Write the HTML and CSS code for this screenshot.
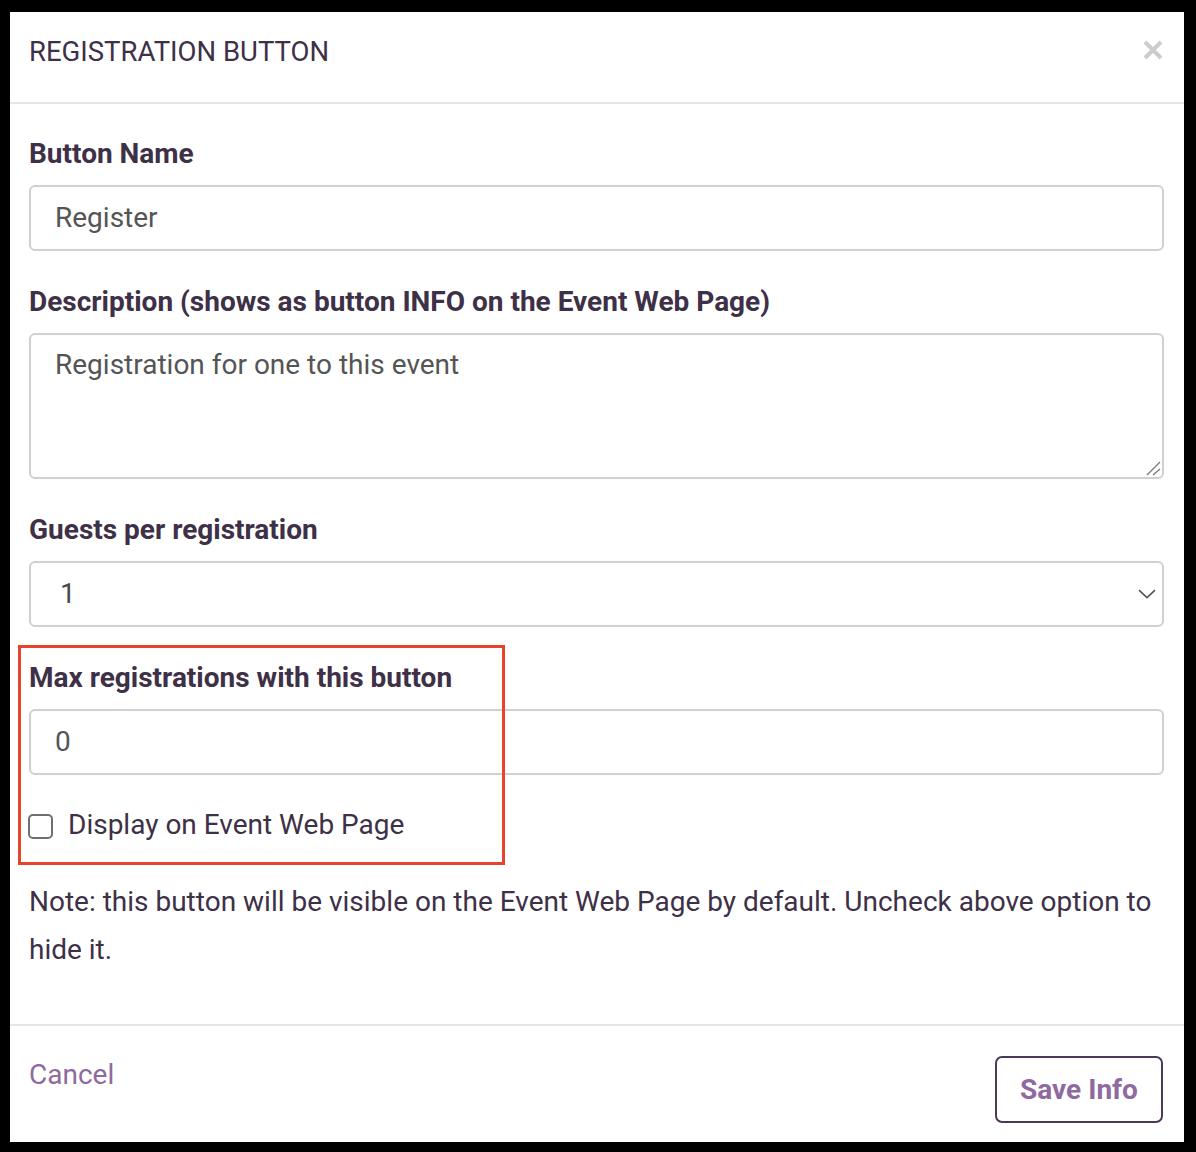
FILE: index.html
```html
<!DOCTYPE html>
<html>
<head>
<meta charset="utf-8">
<link rel="stylesheet" href="styles.css">
</head>
<body>
<div class="modal">
  <div class="modal-header">
    <h1 class="title">REGISTRATION BUTTON</h1>
    <svg class="close" width="20" height="20" viewBox="0 0 20 20"><path d="M2 2 L18 18 M18 2 L2 18" stroke="#cccccc" stroke-width="4" stroke-linecap="butt" fill="none"/></svg>
  </div>
  <div class="modal-body">
    <div class="field">
      <label class="label">Button Name</label>
      <div class="input">Register</div>
    </div>
    <div class="field">
      <label class="label">Description (shows as button INFO on the Event Web Page)</label>
      <div class="input textarea">Registration for one to this event
        <svg class="grip" width="15" height="15" viewBox="0 0 15 15"><path d="M14 1 L1 14 M14 8 L7 14" stroke="#777" stroke-width="1.3" fill="none"/></svg>
      </div>
    </div>
    <div class="field">
      <label class="label">Guests per registration</label>
      <div class="input select"><span class="sel-val">1</span>
        <svg class="chev" width="18" height="10" viewBox="0 0 18 10"><path d="M1 1.2 L9 8.6 L17 1.2" stroke="#555" stroke-width="1.6" fill="none"/></svg>
      </div>
    </div>
    <div class="field highlight-wrap">
      <label class="label">Max registrations with this button</label>
      <div class="input">0</div>
      <div class="check-row">
        <span class="checkbox"></span>
        <span class="check-label">Display on Event Web Page</span>
      </div>
      <div class="annotation"></div>
    </div>
    <p class="note">Note: this button will be visible on the Event Web Page by default. Uncheck above option to hide it.</p>
  </div>
  <div class="modal-footer">
    <a class="cancel">Cancel</a>
    <button class="save">Save Info</button>
  </div>
</div>
</body>
</html>
```

FILE: styles.css
```css
html, body {
  margin: 0;
  padding: 0;
  background: #000;
}
body {
  font-family: Roboto, "Liberation Sans", sans-serif;
  color: #3d3047;
  height: 1152px;
  overflow: hidden;
}
.modal {
  margin: 12px 0 0 10px;
  width: 1174px;
  height: 1130px;
  background: #fff;
  display: flex;
  flex-direction: column;
}
.modal-header {
  height: 92px;
  flex: none;
  border-bottom: 2px solid #e6e6e6;
  display: flex;
  align-items: flex-start;
  justify-content: space-between;
  padding: 24px 21px 0 19px;
  box-sizing: border-box;
}
.title {
  margin: 0;
  font-size: 27.5px;
  font-weight: 400;
  color: #3d3047;
  line-height: 32px;
}
.close {
  margin-top: 4px;
}
.modal-body {
  padding: 34px 20px 0 19px;
  flex: 1;
}
.field {
  display: flex;
  flex-direction: column;
  margin-bottom: 35px;
}
.label {
  font-size: 28px;
  font-weight: 700;
  line-height: 32px;
  margin-bottom: 15px;
  color: #3d3047;
}
.input {
  height: 66px;
  border: 2px solid #d0d0d0;
  border-radius: 6px;
  box-sizing: border-box;
  padding: 0 24px;
  display: flex;
  align-items: center;
  font-size: 28px;
  line-height: 32px;
  color: #555;
  position: relative;
}
.textarea {
  height: 146px;
  align-items: flex-start;
  padding-top: 14px;
}
.grip {
  position: absolute;
  right: 1px;
  bottom: 1px;
}
.select {
  justify-content: space-between;
  padding-left: 29px;
  padding-right: 6px;
}
.sel-val {
  color: #4a4a4a;
}
.highlight-wrap {
  position: relative;
  margin-bottom: 0;
}
.check-row {
  display: flex;
  align-items: center;
  gap: 15px;
  margin-top: 34px;
  height: 32px;
}
.checkbox {
  flex: none;
  width: 25px;
  height: 25px;
  margin-top: 3px;
  margin-left: -1px;
  border: 2px solid #6f6f6f;
  border-radius: 5px;
  box-sizing: border-box;
}
.check-label {
  font-size: 28px;
  line-height: 32px;
  color: #3d3047;
}
.annotation {
  position: absolute;
  left: -11px;
  top: -17px;
  width: 487px;
  height: 220px;
  border: 3px solid #e8432d;
  box-sizing: border-box;
}
.note {
  margin: 37px 0 0 0;
  font-size: 28px;
  line-height: 48px;
  color: #3d3047;
}
.modal-footer {
  height: 118px;
  flex: none;
  border-top: 2px solid #e6e6e6;
  box-sizing: border-box;
  display: flex;
  justify-content: space-between;
  align-items: flex-start;
  padding: 0 21px 0 19px;
}
.cancel {
  font-size: 28px;
  color: #8e6aa0;
  margin-top: 33px;
  line-height: 32px;
}
.save {
  margin-top: 30px;
  width: 168px;
  height: 67px;
  border: 2px solid #4a3a55;
  border-radius: 7px;
  background: #fff;
  font-family: Roboto, "Liberation Sans", sans-serif;
  font-size: 28px;
  font-weight: 700;
  color: #8e6aa0;
  padding: 0;
}
```
